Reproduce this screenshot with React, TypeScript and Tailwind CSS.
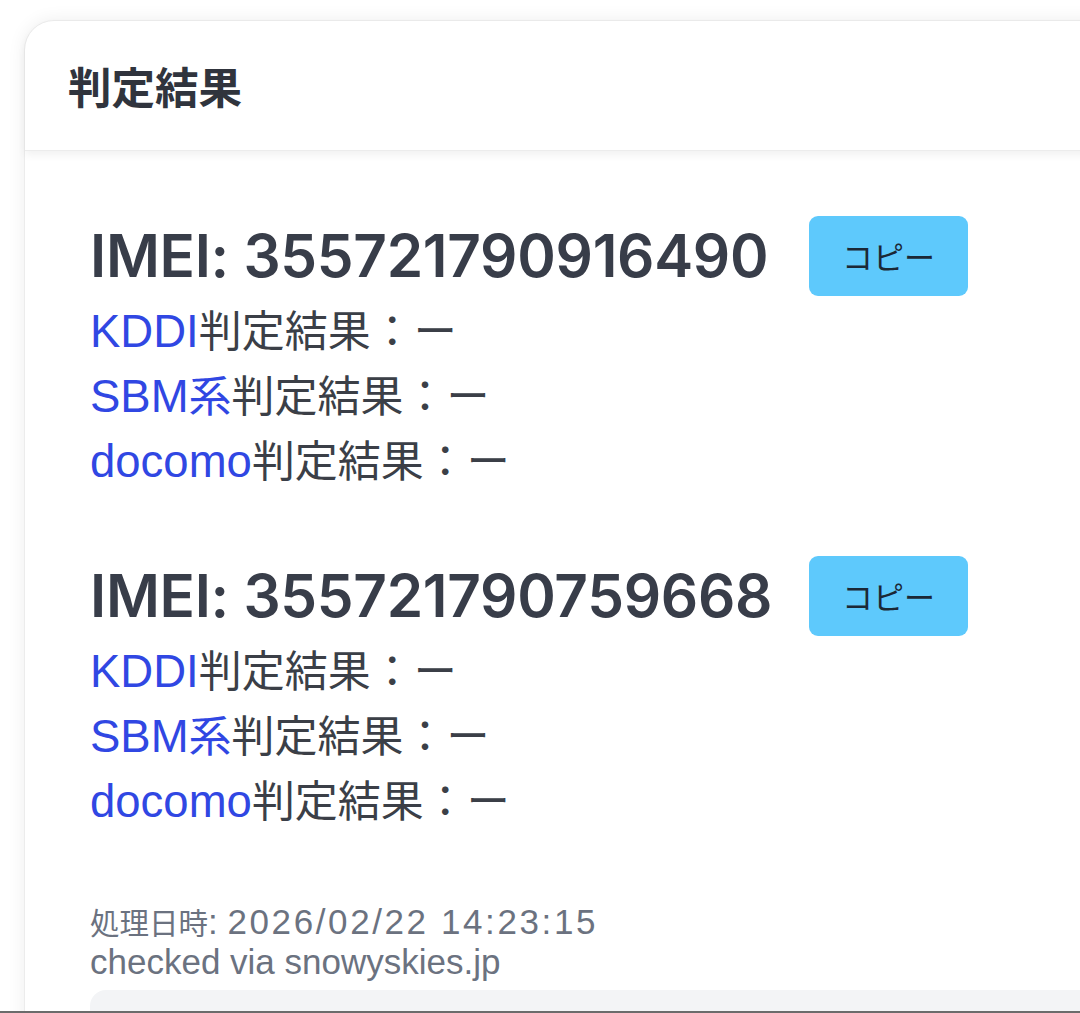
const results = [
  { imei: "355721790916490" },
  { imei: "355721790759668" },
];

const carriers = ["KDDI", "SBM系", "docomo"];

const cjk = '"Noto Sans CJK JP", sans-serif';
const latin = '"Liberation Sans", "Noto Sans CJK JP", sans-serif';

function ResultBlock({ imei }: { imei: string }) {
  return (
    <div className="flex flex-col">
      <div className="flex items-center h-[80px]">
        <h2
          className="w-[719px] text-[58.5px] leading-[80px] font-semibold text-[#383d49] tracking-[-0.3px]"
          style={{ fontFamily: '"Inter", sans-serif' }}
        >
          IMEI: {imei}
        </h2>
        <button
          className="w-[159px] h-[80px] rounded-[9px] bg-[#5ec9fc] text-[31px] text-[#1b2836]"
          style={{ fontFamily: cjk }}
        >
          コピー
        </button>
      </div>
      {carriers.map((c) => (
        <p
          key={c}
          className="h-[65px] leading-[65px] text-[45.5px] text-[#3b3f47]"
          style={{ fontFamily: latin }}
        >
          <span className="text-[#3047e3]">
            {c === "SBM系" ? (
              <>
                SBM<span className="text-[43px]" style={{ fontFamily: cjk }}>系</span>
              </>
            ) : (
              c
            )}
          </span>
          <span className="text-[43px]" style={{ fontFamily: cjk }}>
            判定結果：ー
          </span>
        </p>
      ))}
    </div>
  );
}

export default function App() {
  return (
    <div
      className="h-[1013px] overflow-hidden bg-white flex flex-col border-b-2 border-[#6b6b6b]"
      style={{ fontFamily: latin }}
    >
      <div className="flex-1 pl-[24px] pt-[20px]">
        <div className="mr-[-60px] rounded-[30px] bg-white border border-[#ececec] shadow-[0_0_18px_rgba(0,0,0,0.07)] h-[1200px]">
          <div className="h-[130px] flex items-center px-[43px] rounded-t-[30px] shadow-[0_4px_8px_rgba(0,0,0,0.06)] border-b border-[#ececec]">
            <h1 className="text-[43.5px] font-bold text-[#30343d]" style={{ fontFamily: cjk }}>
              判定結果
            </h1>
          </div>
          <div className="pl-[65px] pt-[65px] flex flex-col">
            <div className="flex flex-col gap-[65px]">
              {results.map((r) => (
                <ResultBlock key={r.imei} imei={r.imei} />
              ))}
            </div>
            <div className="mt-[70px] text-[35px] leading-[40px] text-[#6b7280]">
              <p>
                <span className="text-[29.5px]" style={{ fontFamily: cjk }}>処理日時</span>:{" "}
                <span className="tracking-[2.6px]">2026/02/22 14:23:15</span>
              </p>
              <p>checked via snowyskies.jp</p>
            </div>
            <div className="mt-[8px] h-[120px] rounded-[16px] bg-[#f3f4f6]" />
          </div>
        </div>
      </div>
    </div>
  );
}
